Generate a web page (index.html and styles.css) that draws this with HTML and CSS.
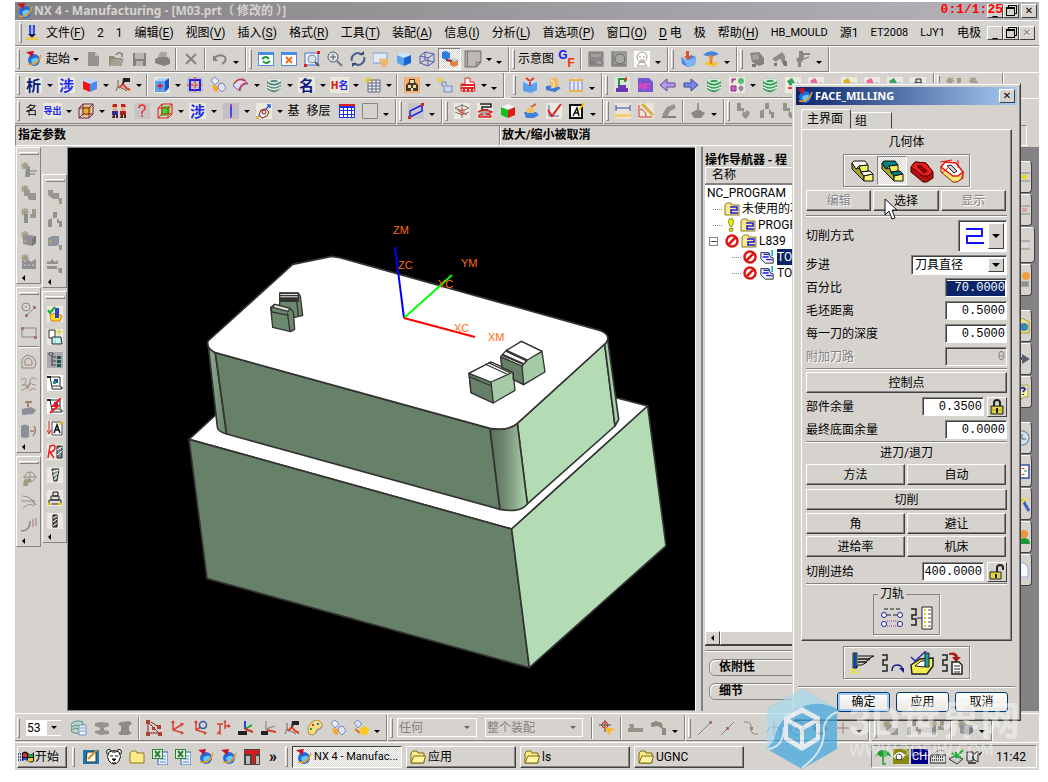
FILE: index.html
```html
<!DOCTYPE html>
<html lang="zh-CN">
<head>
<meta charset="utf-8">
<title>NX 4 - Manufacturing</title>
<link rel="stylesheet" href="styles.css">
</head>
<body>
<svg class="sprite" aria-hidden="true">
<defs>
<linearGradient id="cyl"><stop offset="0" stop-color="#5a705c"/><stop offset=".4" stop-color="#70896f"/><stop offset="1" stop-color="#aed8b0"/></linearGradient>
<linearGradient id="cyl2"><stop offset="0" stop-color="#8db08f"/><stop offset="1" stop-color="#678068"/></linearGradient>
</defs>
<symbol id="nx" viewBox="0 0 16 16"><circle cx="8" cy="9" r="6" fill="#1d6fe0"/><path d="M5 9Q8 6 12 7Q12 11 9 14Q6 14 5 9" fill="#69c6ff"/><path d="M2 13Q12 15 15 4" fill="none" stroke="#f39a1a" stroke-width="1.500"/><path d="M0 1L8 0L6 7L4 4z" fill="#c8102a"/></symbol>
<symbol id="bolt" viewBox="0 0 16 16"><path d="M5 0h6v9H5z" fill="#3c50c8"/><path d="M7 0h2v9H7z" fill="#9cb0ff"/><path d="M4 9h8l-4 4z" fill="#223"/><path d="M2 14h12M4 12L2 15M12 12l2 3M8 12v4" stroke="#f0c000"/></symbol>
<symbol id="new" viewBox="0 0 16 16"><path d="M3 1h7l4 4v10H3z" fill="#96938e"/><path d="M10 1v4h4" fill="#c4c1bc"/></symbol>
<symbol id="open" viewBox="0 0 16 16"><path d="M1 5h5l2 2h6v8H1z" fill="#8d8c7c"/><path d="M4 8h12l-3 7H1z" fill="#a5a494"/><path d="M8 4Q11 0 14 3v3" fill="none" stroke="#8c8f88" stroke-width="2"/></symbol>
<symbol id="save" viewBox="0 0 16 16"><path d="M2 2h13v13H2z" fill="#85827e"/><path d="M4 2h9v6H4zM5 10h7v5H5z" fill="#b9b5b0"/></symbol>
<symbol id="print" viewBox="0 0 16 16"><path d="M6 1h7l-1 6H4z" fill="#a9a6a1"/><path d="M1 8l4-2h9l2 3v4l-6 2-9-3z" fill="#83817d"/></symbol>
<symbol id="x" viewBox="0 0 16 16"><path d="M3 3l10 10M13 3L3 13" stroke="#85827e" stroke-width="2"/></symbol>
<symbol id="undo" viewBox="0 0 16 16"><path d="M2 7Q8 2 13 6Q15 10 10 13" fill="none" stroke="#85827e" stroke-width="2"/><path d="M1 4v6h5z" fill="#85827e"/></symbol>
<symbol id="win" viewBox="0 0 16 16"><path d="M0 1h16v14H0z" fill="#4a8ae8"/><path d="M1 4h14v10H1z" fill="#fff"/></symbol>
<symbol id="refresh" viewBox="0 0 16 16"><use href="#win"/><path d="M4 8Q8 4 11 8M12 10Q8 14 5 10" fill="none" stroke="#1a9a2a" stroke-width="2"/></symbol>
<symbol id="fit" viewBox="0 0 16 16"><use href="#win"/><path d="M5 6l6 6M11 6l-6 6" stroke="#f07020" stroke-width="2"/></symbol>
<symbol id="zbox" viewBox="0 0 16 16"><path d="M1 2h13v12H1z" fill="#eef4ff" stroke="#3a6ad8"/><circle cx="8" cy="8" r="4" fill="#cfe3f2" stroke="#888"/><path d="M11 11l4 4" stroke="#555" stroke-width="2"/><path d="M13 0h3v3h-3zM0 13h3v3H0z" fill="#e02020"/></symbol>
<symbol id="zoom" viewBox="0 0 16 16"><circle cx="6" cy="6" r="5" fill="#dce8f0" stroke="#555"/><path d="M10 10l5 5" stroke="#777" stroke-width="2"/><path d="M3 6h6M6 3v6" stroke="#555"/></symbol>
<symbol id="rot" viewBox="0 0 16 16"><path d="M2 10A6 6 0 0 1 12 4M14 6A6 6 0 0 1 4 12" fill="none" stroke="#49618c" stroke-width="2"/><path d="M9 4h5V0zM7 12H2v4z" fill="#3a4c74"/></symbol>
<symbol id="pan" viewBox="0 0 16 16"><path d="M0 2h14v10H0z" fill="#dfeafb" stroke="#7a9bd8"/><path d="M6 8l2-1 2 3 0-3h1l1 2 1-2 2 1v5l-3 3H9z" fill="#f2b46a"/></symbol>
<symbol id="cube" viewBox="0 0 16 16"><path d="M1 4L8 1l7 3-7 3z" class="fa"/><path d="M1 4l7 3v8l-7-3z" class="fb"/><path d="M15 4L8 7v8l7-3z" class="fc"/></symbol>
<symbol id="pcube" viewBox="0 0 16 16"><path d="M0 0h16v16H0z" fill="#ece9e0"/><path d="M1 4l4-3h10l-4 3z" fill="#a8d0fc"/><path d="M1 4h10v11H1z" fill="#5aa0f4"/><path d="M11 4l4-3v10l-4 4z" fill="#1c50c0"/><path d="M3 9h6M6 6v6" stroke="#e01818" stroke-width="1.500"/></symbol>
<symbol id="wire" viewBox="0 0 16 16"><path d="M1 5L6 1l9 2v8l-6 4-8-3zM1 5l8 2 6-4M9 7v8M6 1v8l9 2M6 9l-5 3" fill="none" stroke="currentColor"/></symbol>
<symbol id="wireG" viewBox="0 0 16 16"><path d="M6 3h7v8h-7zM4 5h6v8H4z" class="fa"/><path d="M1 5h10v10H1zM1 5l4-4h10L11 5M15 1v10l-4 4M5 1v10h10M5 11l-4 4" fill="none" stroke="currentColor"/></symbol>
<symbol id="blocks" viewBox="0 0 16 16"><path d="M0 1l4-1 4 2v5L4 9 0 7z" fill="#2d7be5"/><path d="M8 8l4-1 4 2v5l-4 2-4-2z" fill="#e88040"/><path d="M4 9l6 1" stroke="#a02020" stroke-width="2"/><path d="M8 8l4-1 4 2-4 2z" fill="#b8d8f8"/></symbol>
<symbol id="sheet" viewBox="0 0 16 16"><path d="M1 1h14v10l-4 4H1z" fill="#bcb9b4" stroke="#777"/><path d="M3 1v14M11 15v-4h4" stroke="#777" fill="none"/></symbol>
<symbol id="calc" viewBox="0 0 16 16"><path d="M0 0h16v16H0z" fill="#a59ea0"/><path d="M2 2h12v5H2zM2 9h4v2H2zM2 12h4v2H2zM8 9h6v5H8z" fill="none" stroke="#736c70"/></symbol>
<symbol id="ring" viewBox="0 0 16 16"><path d="M0 0h16v16H0z" fill="#9c9a98"/><path d="M2 1v13h13" stroke="#707070" fill="none"/><circle cx="9" cy="8" r="5" fill="#a5a89a" stroke="#60707a"/></symbol>
<symbol id="face" viewBox="0 0 16 16"><path d="M0 0h16v16H0z" fill="#fff"/><circle cx="8" cy="6" r="5" fill="none" stroke="#999"/><path d="M5 6h2M9 6h2M6 9h4M3 15l3-4h4l3 4z" stroke="#b09080" fill="none"/></symbol>
<symbol id="dcube" viewBox="0 0 16 16"><path d="M1 6l5 2 5-4 5 2-1 8-7 2-6-3z" fill="#4a80e8"/><path d="M1 6l7 3 8-3-1 8-7 2z" fill="#7fb4f4"/><path d="M6 0h3v5h2l-3 4-4-4h2z" fill="#e05020"/></symbol>
<symbol id="beach" viewBox="0 0 16 16"><path d="M0 4Q8-3 16 3L9 6z" fill="#3f86ea"/><path d="M0 13l6-3 10 2-5 4z" fill="#f5c040"/><path d="M6 4h4l-1 9H7z" fill="#f08030"/></symbol>
<symbol id="pc" viewBox="0 0 16 16"><path d="M1 2l9-1 5 6v6l-5 2-7-4z" fill="#85837f"/><path d="M3 4l6-1 1 5-6 1z" fill="#a5a29e"/><path d="M3 13h4v3H3z" fill="#777"/></symbol>
<symbol id="crane" viewBox="0 0 16 16"><path d="M0 8L10 1l3 4v5l-6-2-3 3z" fill="#8e8a86"/><path d="M9 9l6 1v5h-3zM2 12h3v3H2z" fill="#777"/></symbol>
<symbol id="robot" viewBox="0 0 16 16"><path d="M4 0h4v2h7v2H9v4l-3 4v4H3v-4L1 8l3-2z" fill="#8a8782"/><path d="M9 8l5-2" stroke="#6c6a66"/></symbol>
<symbol id="csys" viewBox="0 0 16 16"><path d="M4 1v9l10 3M4 10l8-5" fill="none" stroke="currentColor" stroke-width="1.500"/><path d="M2 3l2-3 2 3zM12 11l3 2-3 2zM11 3l4 0-2 4z" fill="currentColor"/></symbol>
<symbol id="csysr" viewBox="0 0 16 16"><use href="#csys"/><circle cx="11" cy="5" r="3.500" fill="#d6d3ce" stroke="#3058a8" stroke-width="1.500"/></symbol>
<symbol id="csysl" viewBox="0 0 16 16"><path d="M7 9V1" stroke="#2048d0" stroke-width="2"/><path d="M7 9l7-4" stroke="#20a030" stroke-width="2"/><path d="M7 9l8 3" stroke="#d03020" stroke-width="2"/><path d="M0 11h9v4H0z" fill="#222"/></symbol>
<symbol id="csysk" viewBox="0 0 16 16"><path d="M3 3v6l9 5M3 9l-2 5" stroke="#666" fill="none"/><path d="M4 11l4-4 3 4 4 2" stroke="#e04020" fill="none" stroke-width="2"/><path d="M8 1h7v4h-5l-3 3z" fill="#222"/></symbol>
<symbol id="pick" viewBox="0 0 16 16"><path d="M0 0h16v16H0z" fill="#c6c3c4"/><path d="M3 3h10v10H3z" fill="none" stroke="#2020f0" stroke-width="2"/><path d="M0 8h16M8 0v16" stroke="#e02020" stroke-dasharray="3 1"/></symbol>
<symbol id="bottle" viewBox="0 0 16 16"><path d="M1 3l4-3 4 4-4 4z" fill="#e8eefc" stroke="#7a88c0"/><path d="M2 8l6 1v6l-4-1z" fill="#f4a830"/><path d="M9 7l4-1 3 5-4 4-4-4z" fill="#dde4f8" stroke="#7a88c0"/></symbol>
<symbol id="arc" viewBox="0 0 16 16"><path d="M0 9Q3 1 11 2L15 7Q9 6 7 14z" fill="#d8defa" stroke="#6a60c0"/><path d="M1 7Q5 0 12 4M6 13Q8 6 14 6" fill="none" stroke="#e03030" stroke-width="1.500"/></symbol>
<symbol id="stack" viewBox="0 0 16 16"><path d="M1 4Q8-2 15 4v7Q8 19 1 12z" fill="currentColor"/><path d="M2 4Q8 0 14 4Q8 8 2 4M1 7Q8 12 15 7M1 10Q8 15 15 10" fill="none" stroke="#e8f4ec" stroke-width="1.500"/></symbol>
<symbol id="stackd" viewBox="0 0 16 16"><path d="M0 4q5-5 12-2l-2 10q-6 3-10-1z" fill="#b8d4c8" stroke="#5c8c80"/><path d="M0 7q5-3 9-1M0 10q5-3 8-1" fill="none" stroke="#5c8c80"/><path d="M8 5h7v10H8z" fill="#eef4ff" stroke="#7890c0"/><path d="M9 8h5M9 11h5" stroke="#7890c0"/></symbol>
<symbol id="tbl" viewBox="0 0 16 16"><path d="M3 3h12v12H3z" fill="#e8f0ff" stroke="#667"/><path d="M3 6h12M3 9h12M3 12h12M7 3v12M11 3v12" stroke="#667"/><path d="M3 0v6M0 3h6M1 1l4 4M5 1L1 5" stroke="#e8c800"/></symbol>
<symbol id="bug" viewBox="0 0 16 16"><path d="M0 0h16v16H0z" fill="#f0b070"/><path d="M2 14V8l3-3V2h6v3l3 3v6z" fill="#443828"/><path d="M6 3h4v3H6zM4 8h3v3H4zM9 8h3v3H9zM7 11h2v3H7z" fill="#e8d8a0"/></symbol>
<symbol id="gear" viewBox="0 0 16 16"><path d="M5 5h4v4h6v6H7V9H5z" fill="#c8d4f0" stroke="#7a86b8"/><path d="M3 0v7M0 3h7M1 1l4 4M5 1L1 5" stroke="#e8d030"/></symbol>
<symbol id="redm" viewBox="0 0 16 16"><path d="M5 1h5v4h4l1 9H1V7h4z" fill="#fff" stroke="#e82020"/><path d="M1 8h14M1 11h14M4 11v4M8 11v4M12 11v4" stroke="#e82020" stroke-width="2"/></symbol>
<symbol id="gift" viewBox="0 0 16 16"><path d="M1 5h14v8l-6 3-8-2z" fill="#5aa0f0"/><path d="M1 5l6-2 8 2-7 3z" fill="#b8dcfc"/><path d="M8 5v4M8 4L4 1M8 4l4-3" stroke="#e04020" stroke-width="2"/></symbol>
<symbol id="cd" viewBox="0 0 16 16"><path d="M1 9l9-1 6 3-6 4-9-2z" fill="#3a78e0"/><path d="M5 2l6-2q5 5 1 10l-6 2z" fill="#f5b860"/><path d="M6 3q5 2 2 8" stroke="#fff" fill="none"/></symbol>
<symbol id="gate" viewBox="0 0 16 16"><path d="M1 3l6-2 8 2v10H1z" fill="#e8ecf8"/><path d="M1 2h14v2H1z" fill="#f0b040"/><path d="M2 4v10M6 4v11M10 4v11M14 4v10" stroke="#6a78d0"/><path d="M1 13h14v2H1z" fill="#f0b040"/></symbol>
<symbol id="bed" viewBox="0 0 16 16"><path d="M0 0h16v16H0z" fill="#dfe4d8"/><path d="M4 8h8v3H4zM2 11h12v4H2z" fill="#7038b0"/><path d="M5 8V2h6v3" fill="none" stroke="#18a038" stroke-width="2"/><path d="M9 2l4-2v4z" fill="#e03030"/></symbol>
<symbol id="nc" viewBox="0 0 16 16"><path d="M1 1h11l4 4v10H1z" fill="#7058d0"/><path d="M3 6v6M3 6l4 6V6M13 7H9v4h4" stroke="#f040c0" fill="none" stroke-width="1.500"/></symbol>
<symbol id="la" viewBox="0 0 16 16"><path d="M0 8l7-6v4h8v4H7v4z" fill="currentColor" stroke="#5a4a98"/></symbol>
<symbol id="ra" viewBox="0 0 16 16"><path d="M15 8L8 2v4H1v4h7v4z" fill="currentColor" stroke="#3c4aa0"/></symbol>
<symbol id="flow" viewBox="0 0 16 16"><path d="M0 0h16v16H0z" fill="#ece9e0"/><path d="M2 9h5v5H2zM3 6V2h4" stroke="#a02080" fill="#b070c0"/><circle cx="12" cy="4" r="3" fill="#50c070"/><path d="M12 8l3 3-3 4-3-4z" fill="#8890a0"/></symbol>
<symbol id="misc" viewBox="0 0 16 16"><path d="M0 0h16v16H0z" fill="#ece9e0"/><path d="M2 4l5-3 3 5-5 3z" fill="currentColor"/><path d="M8 8l5-3 2 7-6 3z" fill="#8088d8"/><path d="M3 11h5" stroke="#e04040" stroke-width="2"/></symbol>
<symbol id="boys" viewBox="0 0 16 16"><path d="M0 0h16v16H0z" fill="#d8d4cc"/><path d="M2 1h4v3H1zM10 1h4l1 3h-5z" fill="#c02020"/><path d="M2 4h4v4H2zM10 4h4v4h-4z" fill="#e8b088"/><path d="M1 8h6v4H1z" fill="#303090"/><path d="M9 8h6v4H9z" fill="#b02020"/><path d="M2 12h2v3H1zM5 12h2v3H5zM10 12h2v3H9zM13 12h2v3h-2z" fill="#402018"/></symbol>
<symbol id="q" viewBox="0 0 16 16"><path d="M0 0h16v16H0z" fill="#c8c4c4"/><path d="M5 5Q5 2 8 2t3 3q0 2-3 4v2M8 12v2" fill="none" stroke="#e83030" stroke-width="1.500"/></symbol>
<symbol id="bar" viewBox="0 0 16 16"><path d="M0 0h16v16H0z" fill="#c2bfc4"/><path d="M8 2v12" stroke="#5040f0" stroke-width="2"/><path d="M7 1h2v2H7zM7 13h2v2H7z" fill="#c040c0"/></symbol>
<symbol id="node" viewBox="0 0 16 16"><path d="M0 0h16v16H0z" fill="#ece9e0"/><path d="M3 12l2-5 5-1 3 3-2 4-5 2z" fill="none" stroke="#802020"/><circle cx="8" cy="9" r="2" fill="none" stroke="#802020"/><path d="M10 6l4-4M11 2h3v3M1 15l3-3" fill="none" stroke="#2060e0" stroke-width="1.500"/><path d="M0 13h3v3H0z" fill="#f0b040"/></symbol>
<symbol id="grid" viewBox="0 0 16 16"><path d="M0 1h16v14H0z" fill="#2030f0"/><path d="M0 2h16" stroke="#e02020" stroke-width="2"/><path d="M1 5h3v2H1zM5 5h3v2H5zM9 5h3v2H9zM13 5h2v2h-2zM1 8h3v3H1zM5 8h3v3H5zM9 8h3v3H9zM13 8h2v3h-2zM1 12h3v2H1zM5 12h3v2H5zM9 12h3v2H9zM13 12h2v2h-2z" fill="#fff"/></symbol>
<symbol id="sq" viewBox="0 0 16 16"><path d="M.5.5h15v15H.5z" fill="none" stroke="#858a80"/></symbol>
<symbol id="plane" viewBox="0 0 16 16"><path d="M0 0h16v16H0z" fill="#c9c6c6"/><path d="M2 14V8l12-6v6z" fill="none" stroke="#2020f0" stroke-width="1.500"/><path d="M13 0h3v3h-3zM0 13h3v3H0z" fill="#e02020"/></symbol>
<symbol id="layer" viewBox="0 0 16 16"><path d="M0 0h16v16H0z" fill="#ece9e0"/><path d="M8 1v14M1 5l7-3 7 3-7 3zM1 9l7 3 7-3M3 7l10 5" fill="none" stroke="#807468"/><path d="M6 7h4v3H6z" fill="none" stroke="#e05040"/></symbol>
<symbol id="redp" viewBox="0 0 16 16"><path d="M0 0h16v16H0z" fill="#ece9e0"/><path d="M3 1h11v3H5v3h6" fill="none" stroke="#222" stroke-width="1.500"/><path d="M1 9q7-4 14 0-3 2-6 2 5 0 5 3H2q-1-3 4-3" fill="#a8a8a8" stroke="#e82020" stroke-width="1.500"/></symbol>
<symbol id="tool" viewBox="0 0 16 16"><path d="M1 9h12l3 3-5 3H3z" fill="#4080e0"/><path d="M4 5h7v5H4z" fill="#f0c060"/><path d="M8 4l5-3" stroke="#e06020" stroke-width="2"/></symbol>
<symbol id="check" viewBox="0 0 16 16"><path d="M0 0h16v16H0z" fill="#ece9e0"/><path d="M3 2v11h10" stroke="#4060c0" fill="none"/><path d="M2 7l4 6 9-12" fill="none" stroke="#e02020" stroke-width="2"/></symbol>
<symbol id="apen" viewBox="0 0 16 16"><path d="M1 2h12v13H1z" fill="#fff" stroke="#111" stroke-width="2"/><path d="M4 13l4-8 2 8M5 10h5" fill="none" stroke="#111" stroke-width="1.500"/><path d="M15 0l-5 7" stroke="#f0c000" stroke-width="2"/></symbol>
<symbol id="ruler" viewBox="0 0 16 16"><path d="M0 0h16v16H0z" fill="#e8e4d8"/><path d="M1 2v6M15 2v6M1 5h14" stroke="#2850b0" fill="none"/><path d="M0 11h16v3H0z" fill="#f0d070"/></symbol>
<symbol id="angle" viewBox="0 0 16 16"><path d="M0 0h16v16H0z" fill="#e8e4d8"/><path d="M1 2v12h13M2 6q6 2 6 7" stroke="#d03030" fill="none"/><path d="M4 1l11 11" stroke="#d8b040" stroke-width="3"/></symbol>
<symbol id="grayt" viewBox="0 0 16 16"><path d="M1 12l5-8 7-3 2 4-6 3-3 6z" fill="#96938e"/><path d="M1 14h14" stroke="#85827e" stroke-width="2"/></symbol>
<symbol id="grayd" viewBox="0 0 16 16"><path d="M1 10l7-4 7 4-4 5H4z" fill="#8a8884"/><path d="M8 0v8" stroke="#9a9692" stroke-width="2"/></symbol>
<symbol id="grayw" viewBox="0 0 16 16"><path d="M1 0h4v5h3v3H1zM7 8l3 2v-3l4 2-1 3-3 4-4-3" fill="#96938f"/></symbol>
<symbol id="star" viewBox="0 0 16 16"><path d="M4 0v7M0 4h8M1 1l6 6M7 1L1 7" stroke="#a29c84" stroke-width="1.500"/></symbol>
<symbol id="s1" viewBox="0 0 16 16"><use href="#star"/><path d="M5 5h4v10H4z" fill="#8c8e96"/><path d="M9 9h7M9 12h5" stroke="#aaa598" stroke-width="2"/></symbol>
<symbol id="s2" viewBox="0 0 16 16"><use href="#star"/><path d="M3 5h6v3h6v7H8l-2-4H3z" fill="#999794"/></symbol>
<symbol id="s3" viewBox="0 0 16 16"><use href="#star"/><path d="M3 6h4v9H3z" fill="#8b8d96"/><path d="M11 1h4v9H9V6h2z" fill="#a09a8c"/></symbol>
<symbol id="s4" viewBox="0 0 16 16"><use href="#star"/><path d="M2 6l5-2 8 1v7l-4 3-9-2z" fill="#8f9098"/><path d="M11 8l4-3v7l-4 3z" fill="#74767e"/><path d="M3 9h3v3H3z" fill="#b09c80"/></symbol>
<symbol id="s5" viewBox="0 0 16 16"><use href="#star"/><path d="M1 6l3 2 3-3 3 3 5-3v10H1z" fill="#8f9196"/><path d="M3 11h2M7 11h2M11 11h2" stroke="#d6d3ce"/></symbol>
<symbol id="t1" viewBox="0 0 16 16"><path d="M1 1h5v3h6v6H6L1 6z" fill="#999794"/><path d="M11 11l1-2h3v6h-3v-3z" fill="#a09c88"/></symbol>
<symbol id="t2" viewBox="0 0 16 16"><path d="M6 0h4v6H6zM1 8l4-2v9H1zM10 7l2 0v2h3v6h-3v-4h-2z" fill="#92918c"/></symbol>
<symbol id="t3" viewBox="0 0 16 16"><path d="M1 3l4-2h7v8l-3 2H1z" fill="#8f949e"/><path d="M2 5h3v3H2z" fill="#b09c80"/><path d="M11 10h4v5h-3v-3z" fill="#a09c88"/></symbol>
<symbol id="t4" viewBox="0 0 16 16"><path d="M0 3l3 1 2-3 3 3 3-2v4H0zM0 8h10v3H0zM11 10h4v5h-3z" fill="#92918c"/></symbol>
<symbol id="circ" viewBox="0 0 16 16"><circle cx="5" cy="5" r="4" fill="none" stroke="#8b8884"/><path d="M5 4v2M6 13l7-7" stroke="#8b8884"/><path d="M4 12h3v3H4zM12 4h3v3h-3z" fill="#a8746c"/></symbol>
<symbol id="rect" viewBox="0 0 16 16"><path d="M1 3h14v9H1z" fill="none" stroke="#8b8884"/><path d="M0 2h3v3H0zM13 11h3v3h-3z" fill="#a8746c"/></symbol>
<symbol id="cont" viewBox="0 0 16 16"><path d="M1 5l5-4 6 2q5 6 1 11H1z" fill="none" stroke="#8b8884"/><path d="M4 6l3-2q5 1 4 7H4z" fill="none" stroke="#a88078"/></symbol>
<symbol id="curl" viewBox="0 0 16 16"><path d="M0 3q6-4 5 1T1 8h5q-1 5-6 5M15 2Q9-1 9 4q0 4 6 4M8 14q4-4 7-1" fill="none" stroke="#96928c"/><path d="M6 12l3-6" stroke="#b07868" stroke-width="1.500"/></symbol>
<symbol id="slab" viewBox="0 0 16 16"><path d="M1 9l9-2 5 3-3 4-11 1z" fill="#8c8e9a"/><path d="M7 1v6M4 2h7" stroke="#a08870" stroke-width="2"/></symbol>
<symbol id="drum" viewBox="0 0 16 16"><path d="M0 3q4-3 8 0v11q-4 2-8 0z" fill="#8c8e9a"/><path d="M9 8h4M13 3q3 5-1 10" stroke="#a87c70" fill="none" stroke-width="1.500"/></symbol>
<symbol id="pan2" viewBox="0 0 16 16"><circle cx="9" cy="6" r="5" fill="none" stroke="#96928c"/><path d="M2 6h14M9 1v6" stroke="#96928c"/><path d="M3 9l6-2 2 3-4 2v3H2z" fill="#a09c80"/></symbol>
<symbol id="curve" viewBox="0 0 16 16"><path d="M1 2q10 0 13 9M0 7h14M2 14q7-6 11-2" fill="none" stroke="#96928c"/><path d="M10 5l5 6" stroke="#a86c64"/></symbol>
<symbol id="hook" viewBox="0 0 16 16"><path d="M0 14q9 0 9-10" fill="none" stroke="#8b8884" stroke-width="1.500"/><path d="M12 2v8M15 1v8" stroke="#a8746c"/></symbol>
<symbol id="cam" viewBox="0 0 16 16"><path d="M0 0h16v16H0z" fill="#ece9e0"/><path d="M3 9l6-2 6 3-2 5H4z" fill="#f4e020" stroke="#e87018"/><path d="M8 2h4v10H8z" fill="#3440c8"/><path d="M1 4l2 3 5-6" fill="none" stroke="#18b030" stroke-width="2"/></symbol>
<symbol id="ops" viewBox="0 0 16 16"><path d="M0 0h16v16H0z" fill="#ece9e0"/><path d="M2 1h6v8H2z" fill="#fff" stroke="#333"/><path d="M5 8h9l1 7H5z" fill="#8ee0e0" stroke="#333"/><path d="M12 0v6M9 3h6" stroke="#e0d000"/><path d="M7 9v5M10 9v5M12 9v5" stroke="#fff"/></symbol>
<symbol id="tree" viewBox="0 0 16 16"><path d="M0 0h16v16H0z" fill="#a9a9ac"/><path d="M2 1h4v2H2zM5 3v11M5 5h4M5 9h4M5 13h4" stroke="#444" fill="#fff"/><path d="M10 4h4v3h-4zM10 8h4v3h-4zM10 12h4v3h-4z" fill="#1c5a5a"/></symbol>
<symbol id="scroll" viewBox="0 0 16 16"><path d="M0 0h16v16H0z" fill="#fff"/><path d="M3 2h10v10h2v2H5v-2z" fill="#fff" stroke="#222"/><path d="M0 2h4" stroke="#222" stroke-width="2"/><path d="M7 4h4v4H7z" fill="#2040b0"/><path d="M6 6h3v3H6z" fill="#20a070"/><path d="M5 11h7" stroke="#333"/></symbol>
<symbol id="rscroll" viewBox="0 0 16 16"><use href="#scroll"/><path d="M14 0L6 8h5L3 15" fill="none" stroke="#f01818" stroke-width="2"/></symbol>
<symbol id="dna" viewBox="0 0 16 16"><path d="M0 0h16v16H0z" fill="#ece9e0"/><path d="M2 0v12M0 9l2 4 2-4" stroke="#e02020" fill="none"/><path d="M5 1h10v13H5z" fill="#fff" stroke="#446"/><path d="M7 12l3-8 3 8M8 9h4" stroke="#111" fill="none" stroke-width="1.500"/><path d="M15 0l-3 4" stroke="#f0d000" stroke-width="2"/></symbol>
<symbol id="rn" viewBox="0 0 16 16"><path d="M0 0h16v16H0z" fill="#ece9e0"/><path d="M1 14L3 2q6-2 5 2-1 4-5 4l4 6" fill="none" stroke="#f01818" stroke-width="1.500"/><path d="M10 2h5v12h-5z" fill="#789" stroke="#222"/><path d="M10 6l5-3M10 11l5-4" stroke="#fff"/></symbol>
<symbol id="screw" viewBox="0 0 16 16"><path d="M0 0h16v16H0z" fill="#ece9e0"/><path d="M5 2h7l-2 12H7z" fill="#90a098" stroke="#222"/><path d="M5 5l7-2M6 9l5-3M7 13l3-3" stroke="#fff"/></symbol>
<symbol id="drill" viewBox="0 0 16 16"><path d="M0 0h16v16H0z" fill="#ece9e0"/><path d="M6 2h4v12H6z" fill="#555" stroke="#111"/><path d="M6 5l4-2M6 9l4-3M6 13l4-3" stroke="#fff"/></symbol>
<symbol id="mach" viewBox="0 0 16 16"><path d="M0 0h16v16H0z" fill="#ece9e0"/><path d="M6 2h5v4H6zM4 6h8v4H4zM2 10h12v4H2z" fill="#ddd" stroke="#222"/><path d="M1 14h4M11 14h4" stroke="#e0c800" stroke-width="2"/></symbol>
<symbol id="pal" viewBox="0 0 16 16"><path d="M2 14Q-1 7 5 2t10 2q1 6-5 5-1 5-4 6z" fill="#f5dc80" stroke="#b09040"/><path d="M5 4h2v2H5z" fill="#e03030"/><path d="M10 3h2v2h-2z" fill="#2870e0"/><path d="M3 8h2v2H3z" fill="#20a040"/><path d="M8 14l6-7" stroke="#8090c0"/></symbol>
<symbol id="slot" viewBox="0 0 16 16"><path d="M1 3l5-1 9 1v3l-5 2v2l5 1v3l-8 1-6-2v-2l5-1V8L1 6z" fill="#96938f"/></symbol>
<symbol id="slot2" viewBox="0 0 16 16"><path d="M3 2l10-1 2 3-3 2v5l3 2-4 2H3l-2-2 3-2V6L1 4z" fill="#8e8b86"/></symbol>
<symbol id="base" viewBox="0 0 16 16"><path d="M1 4h5v4h9v4H0V8h2z" fill="#96938a"/></symbol>
<symbol id="mate" viewBox="0 0 16 16"><path d="M0 3l5-2 6 2 1 5h3v7h-4V9L7 6 0 7z" fill="#8e8b80"/></symbol>
<symbol id="filter" viewBox="0 0 16 16"><path d="M6 0v12M0 5h12" stroke="#444"/><circle cx="6" cy="5" r="3" fill="none" stroke="#e02020"/><path d="M6 7l10 2-5 3-1 4-2-4z" fill="#f8b820"/></symbol>
<symbol id="ln" viewBox="0 0 16 16"><path d="M1 15L14 2" stroke="#8b8884"/><path d="M12 1h3v3h-3z" fill="#a8746c"/></symbol>
<symbol id="ln2" viewBox="0 0 16 16"><path d="M1 15L14 2" stroke="#8b8884"/><path d="M6 7h3v3H6z" fill="#a8746c"/></symbol>
<symbol id="scv" viewBox="0 0 16 16"><path d="M1 2q8-1 7 6t7 6" stroke="#8b8884" fill="none"/><path d="M7 7h3v3H7z" fill="#a8746c"/></symbol>
<symbol id="cross" viewBox="0 0 16 16"><path d="M8 1v14M1 12q3-7 7-5 5-2 7 5" stroke="#777" fill="none"/></symbol>
<symbol id="cdot" viewBox="0 0 16 16"><circle cx="8" cy="8" r="7" fill="none" stroke="#777"/><path d="M7 7h3v3H7z" fill="#a8746c"/></symbol>
<symbol id="quad" viewBox="0 0 16 16"><circle cx="8" cy="8" r="6" fill="none" stroke="#777"/><path d="M7 1h3v3H7zM7 12h3v3H7zM1 7h3v3H1zM12 7h3v3h-3z" fill="#a8746c"/></symbol>
<symbol id="plus" viewBox="0 0 16 16"><path d="M8 2v12M2 8h12" stroke="#a8746c"/></symbol>
<symbol id="flag" viewBox="0 0 16 16"><path d="M4 4q3-3 6 0t6-1v9q-3 3-6 0t-6 0z" fill="#111"/><path d="M5 5q2-2 4 0v3H5z" fill="#e83030"/><path d="M10 5q2 1 5 0v3h-5z" fill="#20b040"/><path d="M5 9h4v3q-2-2-4 0z" fill="#3050e8"/><path d="M10 9h5v3q-3 1-5 0z" fill="#f0d020"/><path d="M0 5h3M0 8h3M0 11h3" stroke="#3048b8" stroke-dasharray="1 1" stroke-width="2"/></symbol>
<symbol id="desk" viewBox="0 0 16 16"><path d="M0 1h16v14H0z" fill="#1878b8"/><path d="M4 3h9v10H3z" fill="#fff8e0" stroke="#333"/><path d="M5 10l9-9" stroke="#c89020" stroke-width="2"/></symbol>
<symbol id="bear" viewBox="0 0 16 16"><circle cx="3" cy="3" r="2.500" fill="#fff" stroke="#111"/><circle cx="13" cy="3" r="2.500" fill="#fff" stroke="#111"/><path d="M3 3q5-3 10 0 3 5 0 9-5 6-10 0-3-4 0-9z" fill="#fff" stroke="#111"/><path d="M4 7h3M9 7h3M6 10h4l-2 2zM6 14h4M7 2v2M9 2v2" stroke="#111" fill="#111"/></symbol>
<symbol id="fold" viewBox="0 0 16 16"><path d="M1 4l2-2h4l1 2h7v10H1z" fill="#fbe98a" stroke="#8a7a20"/></symbol>
<symbol id="ofold" viewBox="0 0 16 16"><path d="M1 4l2-2h4l1 2h6v10H1z" fill="#fbe98a" stroke="#7a6a10"/><path d="M1 14L4 7h11.500l-2 7z" fill="#fff6a0" stroke="#7a6a10"/></symbol>
<symbol id="xls" viewBox="0 0 16 16"><path d="M6 3h10v13H6z" fill="#e8f0ff" stroke="#3060a8"/><path d="M8 7h6M8 10h6M8 13h6" stroke="#6090d0"/><path d="M0 0h11v10H0z" fill="#30803c"/><path d="M1 1h9v8H1z" fill="#dff0dc"/><path d="M3 2l5 6M8 2L3 8" stroke="#30803c" stroke-width="2"/></symbol>
<symbol id="tt" viewBox="0 0 16 16"><path d="M0 0h16v16H0z" fill="#444"/><path d="M1 1h14v4h-4v10H8V5H1z" fill="#e01818"/><path d="M2 7h4v8H2zM12 7h3v8h-3z" fill="#bbb"/></symbol>
<symbol id="ncf" viewBox="0 0 16 14"><path d="M1 3l2-2h4l1 2h7v10H1z" fill="#fbe98a" stroke="#8a7a20"/><path d="M6 5h7v3H7v3h7" fill="none" stroke="#1818f0" stroke-width="1.500"/></symbol>
<symbol id="no" viewBox="0 0 14 14"><circle cx="7" cy="7" r="5.500" fill="#fff" stroke="#e01414" stroke-width="2.500"/><path d="M3 11l8-8" stroke="#e01414" stroke-width="2.500"/></symbol>
<symbol id="bang" viewBox="0 0 8 16"><path d="M2 1h4l1 3-2 6H3L1 4zM2 12h4v3H2z" fill="#f4f000" stroke="#777718"/></symbol>
<symbol id="op" viewBox="0 0 16 16"><path d="M1 3h9l2 5 3 1v6H6l-5-5z" fill="#f4f6ff" stroke="#111"/><path d="M4 5h7M3 8h7M7 11h7" stroke="#1818f0" stroke-width="1.500"/><path d="M14 0v7" stroke="#14b8b8" stroke-width="2"/></symbol>
<symbol id="part" viewBox="0 0 24 24"><path d="M2 4v6l12 12v-6l-3-2v-3L8 9 6 10z" fill="#a8a430" stroke="#111"/><path d="M2 4l2-2h11l3 4-9 1-3 3z" class="fa" stroke="#111"/><path d="M9 7l9-1v6l-7 1z" fill="#f4f060" stroke="#111"/><path d="M11 13l9-1 3 3-9 2z" class="fa" stroke="#111"/><path d="M14 17l9-2v7h-9z" fill="#f8f480" stroke="#111"/></symbol>
<symbol id="slabr" viewBox="0 0 24 24"><path d="M1 8l4-5 11 1 7 9v6l-6 4h-4L1 13z" fill="#b01010" stroke="#400"/><path d="M1 8l4-5 11 1 7 9-5 4h-5z" fill="#e82020" stroke="#500"/><path d="M7 7l3-1 7 6-3 2z" fill="#a00" stroke="#400"/></symbol>
<symbol id="slabo" viewBox="0 0 24 24"><path d="M1 8l4-5 11 1 7 9v6l-6 4h-4L1 13z" fill="#f4ee70" stroke="#a01010"/><path d="M1 8l4-5 11 1 7 9-5 4h-5z" fill="#fff" stroke="#e81818" stroke-width="1.500"/><path d="M7 7l4-1 6 6-3 2z" fill="#ccc" stroke="#222"/><path d="M0 3l12-2M18 1v8M2 14l7-6M21 20l3-8" stroke="#e81818"/></symbol>
<symbol id="zig" viewBox="0 0 20 18"><path d="M1 2h16v7H2v7h17" fill="none" stroke="#1414f0" stroke-width="2"/></symbol>
<symbol id="lock" viewBox="0 0 16 16"><path d="M5 7V4q0-3 3-3t3 3v3" fill="none" stroke="#222" stroke-width="2"/><path d="M2 7h12v8H2z" fill="#c8bc28" stroke="#222"/><path d="M4 9h8M4 13h8" stroke="#fff68a"/><path d="M7 9h2v5H7z" fill="#222"/></symbol>
<symbol id="unlock" viewBox="0 0 16 16"><path d="M8 8V4q0-3 3-3t3 3v2" fill="none" stroke="#222" stroke-width="2"/><path d="M1 8h11v7H1z" fill="#e0d830" stroke="#222"/><path d="M6 10h2v4H6z" fill="#222"/></symbol>
<symbol id="path1" viewBox="0 0 24 24"><path d="M4 3h17M7 9h11" stroke="#222" stroke-dasharray="4 2"/><path d="M7 15h11M7 20h11" stroke="#a030a0" stroke-dasharray="1 1"/><g fill="#fff" stroke="#1c1c90"><circle cx="4" cy="9" r="2.500"/><circle cx="20" cy="9" r="2.500"/><circle cx="4" cy="18" r="2.500"/><circle cx="20" cy="18" r="2.500"/></g></symbol>
<symbol id="path2" viewBox="0 0 24 24"><path d="M1 3h5v6H2v4h4v6H1" fill="none" stroke="#222" stroke-width="1.500"/><path d="M7 12h5" stroke="#1c1c90"/><path d="M12 1h10v22H12z" fill="#fff" stroke="#222"/><path d="M14 4h2M14 8h2M14 12h2M14 16h2M14 20h2" stroke="#d8cc18" stroke-width="2"/><path d="M18 4h3M18 8h3M18 12h3M18 16h3M18 20h3" stroke="#555"/></symbol>
<symbol id="gen" viewBox="0 0 24 24"><path d="M3 2h4v15H3z" fill="#18a0a0" stroke="#222"/><path d="M5 2v15" stroke="#2020b0" stroke-width="1.500"/><path d="M8 5h16l-6 3H8h12l-5 3H8h9l-5 3H8l-2 3" stroke="#111" fill="none"/><path d="M0 19h2M4 18v4M8 19h2M1 22h2M7 22h2" stroke="#f0e020" stroke-width="2"/></symbol>
<symbol id="zg" viewBox="0 0 24 24"><path d="M2 4h5v5H3v5h4v6H2" fill="none" stroke="#222" stroke-width="1.500"/></symbol>
<symbol id="replay" viewBox="0 0 24 24"><use href="#zg"/><path d="M12 20q0-6 5-6t5 4" fill="none" stroke="#1c1c90" stroke-width="1.500"/><path d="M19 17h5v5z" fill="#1c1c90"/></symbol>
<symbol id="verify" viewBox="0 0 24 24"><path d="M1 14l9-6 13-1v8l-6 8H2z" fill="#f4ee50" stroke="#222" stroke-width="1.500"/><path d="M5 15l6-5h7l-4 6z" fill="#fff" stroke="#222"/><path d="M15 2h4v14h-4z" fill="#18a0a0" stroke="#222"/><path d="M1 6l4 4L16 0" fill="none" stroke="#2030b0" stroke-width="1.500"/></symbol>
<symbol id="list" viewBox="0 0 24 24"><use href="#zg"/><path d="M9 2q8-2 9 4h3l-5 5-4-5h3q-1-3-6-2z" fill="#b01818"/><path d="M12 11h7l3 3v9H12z" fill="#fff" stroke="#222" stroke-width="1.500"/><path d="M14 15h6M14 18h6M14 21h6" stroke="#222"/></symbol>
<symbol id="umb" viewBox="0 0 16 16"><path d="M0 8q2-7 8-7t8 7l-3-2-3 2-2-2-2 2-3-2z" fill="#18a028"/><path d="M8 6v9h3" fill="none" stroke="#18a028" stroke-width="1.500"/></symbol>
<symbol id="nv" viewBox="0 0 16 16"><path d="M0 0h16v15H0z" fill="#8a8a10"/><path d="M0 8q6-9 12-2-4 8-12 2" fill="#fff"/><circle cx="6" cy="8" r="3" fill="none" stroke="#333"/></symbol>
<symbol id="kb" viewBox="0 0 16 16"><path d="M1 6h15v8H0z" fill="#ddd" stroke="#222"/><path d="M2 8h12M2 11h12" stroke="#222" stroke-dasharray="1 1" stroke-width="1.500"/><path d="M4 5q4-5 10-3" stroke="#222" fill="none" stroke-dasharray="1 1"/></symbol>
<symbol id="usb" viewBox="0 0 16 16"><path d="M1 10l6-3 8 3-6 5z" fill="#ccc" stroke="#333"/><path d="M4 4l4 4 7-7M8 3v5h5" fill="none" stroke="#20b030" stroke-width="2"/></symbol>
<symbol id="spk" viewBox="0 0 16 16"><path d="M1 3h6v9H1zM7 6l5-4v11l-5-3z" fill="#ddd" stroke="#222"/><path d="M13 6l3-3M2 14h8" stroke="#222" stroke-width="1.500"/></symbol>
<symbol id="clk" viewBox="0 0 16 16"><circle cx="8" cy="8" r="7" fill="#cfe0f0" stroke="#8898a8" stroke-width="1.500"/><path d="M8 4v5h4" stroke="#556" fill="none"/></symbol>
<symbol id="net" viewBox="0 0 16 16"><path d="M2 4l6-4 7 4v11H2z" fill="#f4e480" stroke="#a89838"/><circle cx="10" cy="9" r="4" fill="#3080d8"/><path d="M9 6q4 2 1 6" fill="#30a850"/></symbol>
<symbol id="cur" viewBox="0 0 16 16"><path d="M16 8L8 3v3H2l3 3H8v4z" fill="#556070"/></symbol>
<symbol id="help" viewBox="0 0 16 16"><path d="M3 1h11v12h-4l-3 3v-3H3z" fill="#f4f0a0" stroke="#a8a050"/><path d="M7 5q2-3 4 0l-2 3M9 10v1" stroke="#2030c0" fill="none" stroke-width="2"/></symbol>
<symbol id="chart" viewBox="0 0 16 16"><path d="M2 2h13v13H2z" fill="#fff" stroke="#3850a0" stroke-width="1.500"/><path d="M9 5v1M9 11v1" stroke="#e03030" stroke-width="3"/><path d="M10 8h3" stroke="#209040"/></symbol>
<symbol id="wand" viewBox="0 0 16 16"><path d="M8 3l7 12" stroke="#4060c8" stroke-width="3"/><path d="M9 1v6M6 4h8M6 8l7-6" stroke="#e8dc50" stroke-width="1.500"/></symbol>
<symbol id="user" viewBox="0 0 16 16"><circle cx="10" cy="5" r="4" fill="#e89838"/><path d="M4 15q0-6 6-6t6 6z" fill="#209838"/></symbol>
<symbol id="mtool" viewBox="0 0 16 16"><circle cx="12" cy="4" r="4" fill="#f0a040"/><path d="M7 9h8v6H7z" fill="#a8a6a0"/><path d="M8 11h6M8 13h6" stroke="#777"/></symbol>
<symbol id="rm" viewBox="0 0 16 16"><path d="M2 4h14M2 12h14" stroke="#888"/><path d="M8 6h5v4H8z" class="fa"/></symbol>
</svg>

<div class="app">
  <header class="titlebar">
    <svg class="i"><use href="#nx"/></svg>
    <h1>NX 4 - Manufacturing - [M03.prt（ 修改的 ）]</h1>
    <span class="wb"><button aria-label="最小化">_</button><button aria-label="还原" class="rst"></button><button aria-label="关闭">✕</button></span>
    <span class="rec">0:1/1:25</span>
  </header>

  <nav class="menubar">
    <i class="h"></i><svg class="i"><use href="#bolt"/></svg>
    <div class="menus">
      <button>文件(<u>F</u>)</button><button>2</button><button>1</button><button>编辑(<u>E</u>)</button><button>视图(<u>V</u>)</button><button>插入(<u>S</u>)</button><button>格式(<u>R</u>)</button><button>工具(<u>T</u>)</button><button>装配(<u>A</u>)</button><button>信息(<u>I</u>)</button><button>分析(<u>L</u>)</button><button>首选项(<u>P</u>)</button><button>窗口(<u>O</u>)</button><button><u>D</u> 电</button><button>极</button><button>帮助(<u>H</u>)</button><button class="lat">HB_MOULD</button><button>源1</button><button class="lat">ET2008</button><button class="lat">LJY1</button><button>电极</button>
    </div>
    <span class="wb"><button aria-label="最小化文档">_</button><button aria-label="还原文档" class="rst"></button><button aria-label="关闭文档" class="dis">✕</button></span>
  </nav>

  <div class="row">
    <div class="g"><i class="h"></i><button class="b" aria-label="NX"><svg><use href="#nx"/></svg></button><button class="t">起始</button><button class="d" aria-label="起始菜单"></button><button class="b" aria-label="新建"><svg><use href="#new"/></svg></button><button class="b" aria-label="打开"><svg><use href="#open"/></svg></button><button class="b" aria-label="保存"><svg><use href="#save"/></svg></button><button class="b" aria-label="打印"><svg><use href="#print"/></svg></button><i class="s"></i><button class="b" aria-label="删除"><svg><use href="#x"/></svg></button><i class="s"></i><button class="b" aria-label="撤消"><svg><use href="#undo"/></svg></button><button class="d e" aria-label="更多"></button></div>
    <div class="g"><i class="h"></i><button class="b" aria-label="刷新"><svg><use href="#refresh"/></svg></button><button class="b" aria-label="适合窗口"><svg><use href="#fit"/></svg></button><button class="b" aria-label="框选缩放"><svg><use href="#zbox"/></svg></button><button class="b" aria-label="缩放"><svg><use href="#zoom"/></svg></button><button class="b" aria-label="旋转"><svg><use href="#rot"/></svg></button><button class="b" aria-label="平移"><svg><use href="#pan"/></svg></button><button class="b blue" aria-label="着色"><svg><use href="#cube"/></svg></button><button class="b violet" aria-label="线框"><svg><use href="#wire"/></svg></button><button class="b on" aria-label="方位"><svg><use href="#blocks"/></svg></button><button class="b" aria-label="布局"><svg class="big"><use href="#sheet"/></svg></button><button class="d" aria-label="布局菜单"></button><button class="d e" aria-label="更多"></button></div>
    <div class="g"><i class="h"></i><button class="t">示意图</button><button class="b gf" aria-label="GF"><b>G</b><em>F</em></button><i class="s"></i><button class="b" aria-label="计算"><svg><use href="#calc"/></svg></button><button class="b" aria-label="圆环"><svg><use href="#ring"/></svg></button><button class="b" aria-label="人像"><svg><use href="#face"/></svg></button><button class="d e" aria-label="更多"></button></div>
    <div class="g"><i class="h"></i><button class="b" aria-label="导入"><svg><use href="#dcube"/></svg></button><button class="b" aria-label="模型"><svg><use href="#beach"/></svg></button><button class="d e" aria-label="更多"></button></div>
    <div class="g"><i class="h"></i><button class="b" aria-label="工作站"><svg><use href="#pc"/></svg></button><button class="b" aria-label="机床"><svg><use href="#crane"/></svg></button><button class="b" aria-label="模拟"><svg><use href="#robot"/></svg></button><button class="d e" aria-label="更多"></button></div>
  </div>

  <div class="row">
    <div class="g"><i class="h"></i><button class="b z navy">析</button><button class="d" aria-label="析菜单"></button><button class="b z">涉</button><button class="b redc" aria-label="红块"><svg><use href="#cube"/></svg></button><button class="d" aria-label="块菜单"></button><button class="b" aria-label="坐标系"><svg><use href="#csysk"/></svg></button><button class="d" aria-label="坐标系菜单"></button><i class="s"></i><button class="b" aria-label="长方体"><svg><use href="#pcube"/></svg></button><button class="d" aria-label="体菜单"></button><button class="b" aria-label="选取"><svg><use href="#pick"/></svg></button><button class="b" aria-label="装配件"><svg><use href="#bottle"/></svg></button><button class="b" aria-label="曲面"><svg><use href="#arc"/></svg></button><button class="d" aria-label="曲面菜单"></button><button class="b teal" aria-label="图层"><svg><use href="#stack"/></svg></button><button class="d" aria-label="图层菜单"></button><button class="b z navy">名</button><button class="d" aria-label="名菜单"></button><button class="b z sm"><b>H</b>名</button><button class="d" aria-label="H名菜单"></button><button class="b" aria-label="表"><svg><use href="#tbl"/></svg></button><button class="d" aria-label="表菜单"></button><i class="s"></i><button class="b" aria-label="刀具库"><svg><use href="#bug"/></svg></button><button class="d" aria-label="刀具库菜单"></button><button class="b" aria-label="创建组件"><svg><use href="#gear"/></svg></button><button class="b" aria-label="机床视图"><svg><use href="#redm"/></svg></button><button class="d" aria-label="视图菜单"></button><button class="d e" aria-label="更多"></button></div>
    <div class="g far"><i class="h"></i><button class="b" aria-label="毛坯"><svg><use href="#gift"/></svg></button><button class="b" aria-label="片体"><svg><use href="#cd"/></svg></button><button class="b" aria-label="框架"><svg><use href="#gate"/></svg></button><button class="d e" aria-label="更多"></button></div>
    <div class="g"><i class="h"></i><button class="b" aria-label="夹具"><svg><use href="#bed"/></svg></button><button class="b" aria-label="NC"><svg><use href="#nc"/></svg></button><button class="b lilac" aria-label="上一个"><svg><use href="#la"/></svg></button><button class="b peri" aria-label="下一个"><svg><use href="#ra"/></svg></button><button class="b green" aria-label="层叠"><svg><use href="#stack"/></svg></button><button class="b" aria-label="流程"><svg><use href="#flow"/></svg></button><button class="d" aria-label="流程菜单"></button><button class="b green" aria-label="层"><svg><use href="#stack"/></svg></button><button class="b green" aria-label="组合"><svg><use href="#misc"/></svg></button><button class="b pink" aria-label="变换"><svg><use href="#misc"/></svg></button><button class="d" aria-label="变换菜单"></button><button class="b gold" aria-label="编辑刀轨"><svg><use href="#misc"/></svg></button><button class="b pink" aria-label="仿真"><svg><use href="#misc"/></svg></button><button class="b green" aria-label="后处理"><svg><use href="#misc"/></svg></button><button class="b" aria-label="车间文档"><svg><use href="#mach"/></svg></button></div>
    <div class="g"><i class="h"></i><button class="b" aria-label="刀轴"><svg><use href="#s3"/></svg></button><button class="b" aria-label="刀柄"><svg><use href="#s1"/></svg></button><button class="d e" aria-label="更多"></button></div>
  </div>

  <div class="row">
    <div class="g"><i class="h"></i><button class="t nar">名</button><button class="b z sm sm2">导出</button><button class="d" aria-label="导出菜单"></button><button class="b maroon" aria-label="方盒"><svg><use href="#wireG"/></svg></button><button class="d" aria-label="方盒菜单"></button><button class="b" aria-label="双人"><svg><use href="#boys"/></svg></button><button class="b" aria-label="帮助"><svg><use href="#q"/></svg></button><button class="b redg" aria-label="线框盒"><svg><use href="#wireG"/></svg></button><button class="d" aria-label="线框盒菜单"></button><button class="b z">涉</button><button class="d" aria-label="涉菜单"></button><button class="b" aria-label="线"><svg><use href="#bar"/></svg></button><button class="d" aria-label="线菜单"></button><button class="b" aria-label="节点"><svg><use href="#node"/></svg></button><button class="d" aria-label="节点菜单"></button><button class="t ji">基</button><button class="t yi">移层</button><button class="b" aria-label="网格"><svg><use href="#grid"/></svg></button><button class="b" aria-label="矩形"><svg><use href="#sq"/></svg></button><button class="d e" aria-label="更多"></button></div>
    <div class="g"><i class="h"></i><button class="b" aria-label="基准面"><svg><use href="#plane"/></svg></button><button class="d e" aria-label="更多"></button></div>
    <div class="g"><i class="h"></i><button class="b" aria-label="层设置"><svg><use href="#layer"/></svg></button><button class="b" aria-label="切削层"><svg><use href="#redp"/></svg></button><button class="b rgb" aria-label="彩块"><svg><use href="#cube"/></svg></button><button class="b" aria-label="工具"><svg><use href="#tool"/></svg></button><button class="b" aria-label="检查"><svg><use href="#check"/></svg></button><button class="b" aria-label="注释"><svg><use href="#apen"/></svg></button><button class="d e" aria-label="更多"></button></div>
    <div class="g"><i class="h"></i><button class="b" aria-label="距离"><svg><use href="#ruler"/></svg></button><button class="b" aria-label="角度"><svg><use href="#angle"/></svg></button><button class="b" aria-label="半径"><svg><use href="#grayt"/></svg></button><i class="s"></i><button class="b" aria-label="偏差"><svg><use href="#grayd"/></svg></button><button class="d e" aria-label="更多"></button></div>
    <div class="g"><i class="h"></i><button class="b" aria-label="扳手"><svg><use href="#grayw"/></svg></button><button class="b" aria-label="信息"><svg><use href="#t2"/></svg></button><button class="b" aria-label="路径"><svg><use href="#grayw"/></svg></button><button class="d e" aria-label="更多"></button></div>
  </div>

  <div class="status"><b>指定参数</b><b>放大/缩小被取消</b></div>

  <main class="work">
    <div class="side">
      <div class="col">
        <div class="vg"><i class="vh"></i><button class="b" aria-label="创建程序"><svg><use href="#s1"/></svg></button><button class="b" aria-label="创建刀具"><svg><use href="#s2"/></svg></button><button class="b" aria-label="创建几何体"><svg><use href="#s3"/></svg></button><button class="b" aria-label="创建方法"><svg><use href="#s4"/></svg></button><button class="b" aria-label="创建操作"><svg><use href="#s5"/></svg></button><button class="l" aria-label="更多"></button></div>
        <div class="vg"><i class="vh"></i><button class="b" aria-label="圆"><svg><use href="#circ"/></svg></button><button class="b" aria-label="矩形"><svg><use href="#rect"/></svg></button><i class="vs"></i><button class="b" aria-label="轮廓"><svg><use href="#cont"/></svg></button><button class="b" aria-label="连接"><svg><use href="#curl"/></svg></button><button class="b" aria-label="投影"><svg><use href="#slab"/></svg></button><button class="b" aria-label="回转"><svg><use href="#drum"/></svg></button><button class="l" aria-label="更多"></button></div>
        <div class="vg"><i class="vh"></i><button class="b" aria-label="编辑曲线"><svg><use href="#pan2"/></svg></button><button class="b" aria-label="修剪"><svg><use href="#curve"/></svg></button><button class="b" aria-label="拉长"><svg><use href="#hook"/></svg></button><button class="l" aria-label="更多"></button></div>
      </div>
      <div class="col low">
        <div class="vg"><i class="vh"></i><button class="b" aria-label="程序顺序"><svg><use href="#t1"/></svg></button><button class="b" aria-label="刀具视图"><svg><use href="#t2"/></svg></button><button class="b" aria-label="几何视图"><svg><use href="#t3"/></svg></button><button class="b" aria-label="方法视图"><svg><use href="#t4"/></svg></button><button class="l" aria-label="更多"></button></div>
        <div class="vg"><i class="vh"></i><button class="b" aria-label="加工"><svg><use href="#cam"/></svg></button><button class="b" aria-label="操作"><svg><use href="#ops"/></svg></button><button class="b" aria-label="导航树"><svg><use href="#tree"/></svg></button><button class="b" aria-label="文档"><svg><use href="#scroll"/></svg></button><button class="b" aria-label="快速文档"><svg><use href="#rscroll"/></svg></button><button class="b" aria-label="注释编辑"><svg><use href="#dna"/></svg></button><button class="b" aria-label="重命名"><svg><use href="#rn"/></svg></button><button class="b" aria-label="螺纹"><svg><use href="#screw"/></svg></button><button class="b" aria-label="机床"><svg><use href="#mach"/></svg></button><button class="b" aria-label="钻头"><svg><use href="#drill"/></svg></button><button class="l" aria-label="更多"></button></div>
      </div>
    </div>

    <section class="view">
      <svg class="model" viewBox="68 148 626 562" preserveAspectRatio="xMinYMin meet" role="img" aria-label="零件模型">
        <g transform="translate(180 210) scale(.33333)" stroke="#333" stroke-width="5" stroke-linejoin="round">
          <path d="M27 688L107 615L1200 540L1305 562L1403 588L995 957z" fill="#fff" stroke="none"/>
          <path d="M107 615L27 688L995 957L1403 588L1305 562" fill="none"/>
          <path d="M27 688L995 957L1048 1373L81 1106z" fill="#678068"/>
          <path d="M995 957L1403 588L1458 1008L1048 1373z" fill="#b3dcb5"/>
          <path d="M84 400Q90 422 106 428L140 672Q112 664 112 650z" fill="url(#cyl2)"/>
          <path d="M106 428L930 655L960 898L140 672z" fill="#678068"/>
          <path d="M1012 640L1274 402L1305 648L1042 882z" fill="#b3dcb5"/>
          <path d="M1274 402L1283 388L1316 628L1305 648z" fill="#a9d2ab"/>
          <path d="M930 655Q985 662 1012 640L1042 882Q1020 910 960 898z" fill="url(#cyl)"/>
          <path d="M84 393L338 163L455 139L480 143L1262 362Q1287 372 1283 388Q1281 398 1274 402L1012 640Q985 664 930 655L106 428Q78 415 84 393z" fill="#fff"/>
          <g stroke-width="4">
            <path d="M299 249L355 249L361 258L368 316L345 322L322 316L299 290z" fill="#6b8a6d"/>
            <path d="M299 250h56v14h-56z" fill="#dfe8df"/>
            <path d="M299 257h56M350 270l5 48" fill="none"/>
            <path d="M299 266h56v8h-56z" fill="#333"/>
            <path d="M272 292L284 283L330 295L340 305L344 358L332 365L278 352z" fill="#6b8a6d"/>
            <path d="M284 283l46 12-6 9-46-12z" fill="#dfe8df"/>
            <path d="M322 308l8 55M272 292l4 14 50 10" fill="none"/>
            <path d="M867 490L933 456L1000 486L1005 541L940 579L873 548z" fill="#a4cba6"/>
            <path d="M867 490L933 516L940 579L873 548z" fill="#678068"/>
            <path d="M867 490L933 456L1000 486L933 516z" fill="#fff"/>
            <path d="M867 500L935 528M915 462L980 492M925 458L990 488" fill="none"/>
            <path d="M962 440L1024 394L1086 424L1095 486L1031 524L1000 508L1000 488L966 472z" fill="#a4cba6"/>
            <path d="M962 440L1026 468L1031 524L1000 508L1000 488L966 472z" fill="#678068"/>
            <path d="M962 440L978 422L1024 394L1086 424L1042 450L1026 468z" fill="#fff"/>
            <path d="M978 422L1042 452M966 434L1030 462" stroke-width="7"/>
          </g>
        </g>
        <g fill="none" stroke-width="2"><path d="M404 318L395 247" stroke="#00f"/><path d="M404 318L452 275" stroke="#0f0"/><path d="M404 318L475 337" stroke="#f00"/></g>
        <g class="axis"><text x="393" y="234">ZM</text><text x="398" y="269">ZC</text><text x="461" y="267">YM</text><text x="438" y="288">YC</text><text x="454" y="332">XC</text><text x="488" y="341">XM</text></g>
      </svg>
    </section>

    <aside class="nav">
      <h2>操作导航器 - 程</h2>
      <div class="colhead">名称</div>
      <ul class="tree">
        <li>NC_PROGRAM</li>
        <li class="l1"><i class="ln"></i><svg class="i"><use href="#ncf"/></svg>未使用的项</li>
        <li class="l1"><i class="ln"></i><svg class="i bang"><use href="#bang"/></svg><svg class="i"><use href="#ncf"/></svg>PROGRAM</li>
        <li class="l0"><button class="exp" aria-label="折叠">−</button><svg class="i no"><use href="#no"/></svg><svg class="i"><use href="#ncf"/></svg>L839</li>
        <li class="l2"><i class="ln"></i><svg class="i no"><use href="#no"/></svg><svg class="i"><use href="#op"/></svg><span class="sel">TO</span></li>
        <li class="l2"><i class="ln"></i><svg class="i no"><use href="#no"/></svg><svg class="i"><use href="#op"/></svg><span>TO</span></li>
      </ul>
      <div class="hs"><button class="left" aria-label="向左滚动"></button><span></span></div>
      <div class="folds"><button>依附性</button><button>细节</button></div>
    </aside>

    <div class="res">
      <button aria-label="装配导航器" class="gold"><svg><use href="#rm"/></svg></button><button aria-label="部件导航器" class="pinkf"><svg><use href="#rm"/></svg></button><button class="cur" aria-label="操作导航器"><svg><use href="#rm"/></svg></button><button aria-label="机床导航器"><svg><use href="#mtool"/></svg></button>
      <button class="gap" aria-label="网络"><svg><use href="#net"/></svg></button><button aria-label="培训"><svg><use href="#cur"/></svg></button><button aria-label="帮助"><svg><use href="#help"/></svg></button>
      <button class="gap" aria-label="历史"><svg><use href="#clk"/></svg></button><button aria-label="材料"><svg><use href="#chart"/></svg></button><button aria-label="向导"><svg><use href="#wand"/></svg></button><button aria-label="角色"><svg><use href="#user"/></svg></button><button aria-label="文档"><svg viewBox="0 0 16 16"><path d="M3 1h7l4 4v10H3z" fill="#f4f8ff" stroke="#90a8e0"/></svg></button>
    </div>
  </main>

  <div class="row foot">
    <div class="g"><i class="h"></i><label class="combo n53"><select aria-label="图层号"><option>53</option></select><i class="d"></i></label><button class="b" aria-label="层设置"><svg><use href="#stackd"/></svg></button><button class="b" aria-label="槽"><svg><use href="#slot"/></svg></button><button class="b" aria-label="槽2"><svg><use href="#slot2"/></svg></button><i class="s"></i><button class="b" aria-label="WCS动态"><svg viewBox="0 0 16 16"><path d="M2 2v11h11M2 2l11 11M5 2l8 5" fill="none" stroke="#802020"/><path d="M0 0h4v4H0zM0 12h4v4H0zM12 12h4v4h-4zM11 5h4v4h-4zM6 7h3v3H6z" fill="#b04030"/></svg></button><button class="b red" aria-label="WCS原点"><svg><use href="#csys"/></svg></button><button class="b red" aria-label="WCS旋转"><svg><use href="#csysr"/></svg></button><button class="b red" aria-label="WCS定向"><svg viewBox="0 0 16 16"><path d="M2 4h6M5 4v11M5 11l-3 3M10 1v8M10 6h5" fill="none" stroke="currentColor" stroke-width="1.500"/><path d="M8 2l2-2 2 2zM13 4l3 2-3 2z" fill="currentColor"/></svg></button><button class="b" aria-label="WCS设置"><svg><use href="#csysl"/></svg></button><button class="b" aria-label="XC方向"><svg viewBox="0 0 16 16"><path d="M5 1v8l9-3M5 9l3 3" stroke="#999" fill="none" stroke-width="1.500"/><path d="M6 10l9 2" stroke="#e04020" stroke-width="2"/><path d="M0 11h7v4H0z" fill="#222"/></svg></button><button class="b" aria-label="YC方向"><svg><use href="#csysk"/></svg></button><button class="b" aria-label="调色板"><svg><use href="#pal"/></svg></button><button class="b" aria-label="隐藏"><svg><use href="#bottle"/></svg></button><button class="b" aria-label="显示"><svg viewBox="0 0 16 16"><path d="M1 3l4-3 4 4-4 4z" fill="#d8def4" stroke="#7a88c0"/><path d="M7 8l5-2 4 3-2 6H8z" fill="#fbc820"/><path d="M2 9l5 4" stroke="#e07020" stroke-width="2"/></svg></button><button class="d e" aria-label="更多"></button></div>
    <div class="g"><i class="h"></i><label class="combo off any"><select aria-label="类型过滤" disabled><option>任何</option></select><i class="d"></i></label><label class="combo off asm"><select aria-label="选择范围" disabled><option>整个装配</option></select><i class="d"></i></label><i class="s"></i><button class="b" aria-label="选择过滤"><svg><use href="#filter"/></svg></button><i class="s"></i><button class="b" aria-label="约束"><svg><use href="#base"/></svg></button><button class="b" aria-label="配对"><svg><use href="#mate"/></svg></button><button class="d e" aria-label="更多"></button></div>
    <div class="g"><i class="h"></i><button class="b" aria-label="端点"><svg><use href="#ln"/></svg></button><button class="b" aria-label="中点"><svg><use href="#ln2"/></svg></button><button class="b" aria-label="控制点"><svg><use href="#scv"/></svg></button><button class="b" aria-label="交点"><svg><use href="#cross"/></svg></button><button class="b" aria-label="圆心"><svg><use href="#cdot"/></svg></button><button class="b" aria-label="象限点"><svg><use href="#quad"/></svg></button><button class="b" aria-label="存在点"><svg><use href="#plus"/></svg></button><button class="d e" aria-label="更多"></button></div>
    <div class="g"><i class="h"></i><button class="b" aria-label="程序"><svg><use href="#s2"/></svg></button><button class="b" aria-label="夹紧"><svg><use href="#t2"/></svg></button><button class="b" aria-label="定位"><svg><use href="#s3"/></svg></button><i class="s"></i><button class="b" aria-label="零件"><svg><use href="#s4"/></svg></button><button class="d e" aria-label="更多"></button></div>
  </div>

  <footer class="task">
    <button class="start"><svg class="i"><use href="#flag"/></svg>开始</button>
    <i class="h"></i>
    <div class="quick"><button class="b" aria-label="桌面"><svg><use href="#desk"/></svg></button><button class="b" aria-label="浏览器"><svg><use href="#bear"/></svg></button><button class="b" aria-label="文件夹"><svg><use href="#fold"/></svg></button><button class="b" aria-label="表格"><svg><use href="#xls"/></svg></button><button class="b" aria-label="表格二"><svg><use href="#xls"/></svg></button><button class="b" aria-label="NX"><svg><use href="#nx"/></svg></button><button class="b" aria-label="NX 二"><svg><use href="#nx"/></svg></button><button class="b" aria-label="工具"><svg><use href="#tt"/></svg></button><button class="b more">»</button></div>
    <i class="h"></i>
    <div class="tasks"><button class="act lat"><svg class="i"><use href="#nx"/></svg>NX 4 - Manufac...</button><button><svg class="i"><use href="#ofold"/></svg>应用</button><button><svg class="i"><use href="#ofold"/></svg>ls</button><button><svg class="i"><use href="#ofold"/></svg>UGNC</button></div>
    <div class="tray"><svg class="i"><use href="#umb"/></svg><svg class="i"><use href="#nv"/></svg><span class="ch">CH</span><svg class="i"><use href="#kb"/></svg><svg class="i"><use href="#usb"/></svg><svg class="i"><use href="#spk"/></svg><time>11:42</time></div>
  </footer>

  <form class="dlg" onsubmit="return false">
    <div class="dt"><svg class="i"><use href="#nx"/></svg><h2>FACE_MILLING</h2><button type="button" class="wx" aria-label="关闭对话框">✕</button></div>
    <div class="tabs"><button type="button" class="cur">主界面</button><button type="button">组</button></div>
    <div class="panel">
      <p class="c">几何体</p>
      <div class="ibox"><button type="button" class="yel" aria-label="部件"><svg><use href="#part"/></svg></button><button type="button" class="tealf on" aria-label="面"><svg><use href="#part"/></svg></button><button type="button" aria-label="检查体"><svg><use href="#slabr"/></svg></button><button type="button" aria-label="检查边界"><svg><use href="#slabo"/></svg></button></div>
      <div class="three"><button type="button" class="pb" disabled>编辑</button><button type="button" class="pb">选择</button><button type="button" class="pb" disabled>显示</button></div>
      <hr>
      <div class="f tall"><label for="cut">切削方式</label><button type="button" id="cut" class="combo cut" aria-label="切削方式"><svg><use href="#zig"/></svg><i class="d"></i></button></div>
      <div class="f"><label for="step">步进</label><span class="combo step"><select id="step"><option>刀具直径</option></select><i class="d"></i></span></div>
      <div class="f"><label for="pct">百分比</label><span class="in hi"><input id="pct" value="70.0000"></span></div>
      <div class="f"><label for="blank">毛坯距离</label><span class="in"><input id="blank" value="0.5000"></span></div>
      <div class="f"><label for="depth">每一刀的深度</label><span class="in"><input id="depth" value="0.5000"></span></div>
      <div class="f dis"><label for="add">附加刀路</label><span class="in"><input id="add" value="0" disabled></span></div>
      <hr>
      <button type="button" class="pb ctl">控制点</button>
      <div class="f"><label for="stock">部件余量</label><span class="in"><input id="stock" value="0.3500"></span><button type="button" class="lk" aria-label="锁定"><svg class="i"><use href="#lock"/></svg></button></div>
      <div class="f"><label for="floor">最终底面余量</label><span class="in"><input id="floor" value="0.0000"></span></div>
      <hr>
      <p class="c">进刀/退刀</p>
      <div class="two"><button type="button" class="pb">方法</button><button type="button" class="pb">自动</button></div>
      <button type="button" class="pb solo">切削</button>
      <div class="two"><button type="button" class="pb">角</button><button type="button" class="pb">避让</button><button type="button" class="pb">进给率</button><button type="button" class="pb">机床</button></div>
      <div class="f feed"><label for="feed">切削进给</label><span class="in"><input id="feed" value="400.0000"></span><button type="button" class="lk" aria-label="解锁"><svg class="i"><use href="#unlock"/></svg></button></div>
      <hr>
      <fieldset><legend>刀轨</legend><button type="button" aria-label="编辑显示"><svg><use href="#path1"/></svg></button><button type="button" aria-label="选项"><svg><use href="#path2"/></svg></button></fieldset>
    </div>
    <div class="ibox bot"><button type="button" aria-label="生成"><svg><use href="#gen"/></svg></button><button type="button" aria-label="重播"><svg><use href="#replay"/></svg></button><button type="button" aria-label="确认"><svg><use href="#verify"/></svg></button><button type="button" aria-label="列表"><svg><use href="#list"/></svg></button></div>
    <hr>
    <div class="acts"><button class="def">确定</button><button type="button">应用</button><button type="button">取消</button></div>
  </form>

  <svg class="ptr" viewBox="0 0 14 22" aria-hidden="true"><path d="M1 1v16l4-4 3 8 3-1-3-8h5z" fill="#fff" stroke="#111"/></svg>

  <div class="wm">
    <svg viewBox="0 0 72 82" aria-hidden="true"><path d="M36 1L71 21v40L36 81 1 61V21z" fill="#3da6e0"/><path d="M36 1L71 21Q50 10 30 22Q12 31 8 52L1 61V21z" fill="#a8dcee"/><path d="M36 19l18 10v23L36 63 18 52V29z" fill="#eaf4fa"/><path d="M36 25l12 6-12 7-12-7zM22 35l12 7v14l-12-7zM50 35l-12 7v14l12-7z" fill="#3da6e0"/><path d="M2 61q16-2 16-22M71 24q-14 6-13 20Q58 64 36 80" fill="none" stroke="#d8eef8" stroke-width="2"/></svg>
    <p><b>3D世界网</b><span>WWW.3DSJW.COM</span></p>
  </div>
</div>
</body>
</html>
```
FILE: styles.css
```css
*{box-sizing:border-box}
:root{--face:#d6d3ce;--dk:#848284;--vd:#424142}
body{margin:0;background:#fff;color:#000;font:12px/16px Roboto,"Noto Sans CJK SC",sans-serif}
button,input,select{font:inherit;color:inherit;padding:0;margin:0;border:0;background:none;border-radius:0}
p,h1,h2,ul{margin:0;padding:0;list-style:none;font-size:12px}
i,em{font-style:normal}
u{text-underline-offset:2px}
.sprite{position:absolute;width:0;height:0}
svg{display:block;flex:none}
.i{width:16px;height:16px}
.fa{fill:var(--a,#ddd)}
.fb{fill:var(--b,#999)}
.fc{fill:var(--c,#777)}

.app{position:relative;display:flex;flex-direction:column;margin:2px 9px 0 15px;min-height:calc(100vh - 14px);background:var(--face)}

/* title and menu */
.titlebar{position:relative;display:flex;align-items:center;gap:1px;height:18px;padding:0 2px;background:linear-gradient(90deg,#848284,#b5b3b8)}
.titlebar h1{flex:1;color:var(--face);font:700 12px/18px "Noto Sans","Noto Sans CJK SC",sans-serif;white-space:nowrap}
.wb{display:flex}
.wb button,.wx{width:16px;height:14px;background:var(--face);border:1px solid;border-color:#fff var(--vd) var(--vd) #fff;font:700 10px/10px "DejaVu Sans",sans-serif}
.titlebar .wb button:last-child{margin-left:2px}
.wb .rst::before{content:"";display:block;width:7px;height:6px;margin-left:2px;border:1px solid #000;border-top-width:2px;box-shadow:2px -2px 0 -1px var(--face),2px -2px 0 0 #000}
.wb .dis{color:var(--dk)}
.rec{position:absolute;right:36px;top:0;color:#f00;font:700 13px/15px "Liberation Mono",monospace}
.menubar{display:flex;align-items:center;height:26px;padding:0 4px;border-top:1px solid #fff;border-bottom:1px solid var(--dk)}
.menubar>svg{margin-left:0}
.menus{display:flex;gap:12px;margin-left:6px;flex:1;white-space:nowrap}
.lat{font-size:11px}

/* tool bars */
.row{display:flex;align-items:stretch;height:26px;border-top:1px solid #fff}
.g{display:flex;align-items:center;padding:0 4px 0 2px;margin-right:1px;border-right:1px solid var(--dk);border-bottom:1px solid var(--dk);box-shadow:1px 0 #fff}
.far{margin-left:6px}
.h{width:3px;height:20px;margin-right:2px;border:1px solid;border-color:#fff var(--dk) var(--dk) #fff;flex:none}
.s{width:2px;height:22px;margin:0 2px;border-left:1px solid var(--dk);border-right:1px solid #fff;flex:none}
.b{display:grid;place-items:center;width:23px;height:22px;flex:none}
.b svg{width:16px;height:16px}
.b svg.big{width:18px;height:18px}
.d{display:grid;place-items:center;width:10px;height:20px;flex:none}
.d::before{content:"";border:3px solid transparent;border-top-color:#000;border-bottom:0}
.d.e{align-items:end;padding-bottom:5px}
.t{padding:0 1px;white-space:nowrap}
.nar{width:19px}.ji{width:17px}.yi{width:33px}
.on{border:1px solid;border-color:var(--dk) #fff #fff var(--dk);background:repeating-conic-gradient(#fff 0 25%,#d6d3ce 0 50%) 0 0/2px 2px}
.z{padding:3px;background:#ebe8dd content-box;color:#1a2af0;font:700 15px/16px "Noto Sans CJK SC",sans-serif}
.navy{color:#0a1a80}
.sm{display:block;padding:3px 2px;font-size:10px;line-height:16px;white-space:nowrap}
.sm2{font-size:9px}
.sm b{color:#e01818}
.gf{display:flex;justify-content:center;font:700 12px/14px "Liberation Sans",sans-serif}
.gf b{color:#1a1af0;align-self:start}.gf em{color:#f03010;align-self:end}
.blue{--a:#c8e4ff;--b:#5aa4f0;--c:#1c64d0}
.redc{--a:#b8d8fc;--b:#f01414;--c:#4a8cf0}
.rgb{--a:#f4f4f4;--b:#10c020;--c:#e01818}
.maroon{--a:#e8b030;color:#702038}
.redg{--a:#30e030;color:#e01818}
.violet{color:#5058b8}.teal{color:#5c8c80}.green{color:#38a058}.pink{color:#e868a0}.gold{color:#d8b010;--a:#e8d820}
.lilac{color:#b898e8}.peri{color:#7888e8}.red{color:#d84030}.pinkf{--a:#d8a8a0}

.status{display:grid;grid-template-columns:483px 1fr;height:21px;margin-right:12px;border:1px solid var(--dk);border-color:var(--dk) #fff #fff var(--dk);line-height:18px;margin-top:1px}
.status b{padding-left:2px}
.status b+b{border-left:1px solid var(--dk);box-shadow:inset 1px 0 #fff}

/* work area */
.work{display:flex;flex:1;margin-top:1px}
.side{display:flex;width:52px;padding-left:1px;flex:none}
.col{width:25px}
.low{margin-left:1px;padding-top:27px}
.vg{display:flex;flex-direction:column;align-items:center;padding-top:4px;margin-bottom:3px;border:1px solid;border-color:#fff var(--dk) var(--dk) #fff}
.vh{width:20px;height:3px;margin-bottom:3px;border:1px solid;border-color:#fff var(--dk) var(--dk) #fff}
.vs{width:21px;height:2px;margin:2px 0;border-top:1px solid var(--dk);border-bottom:1px solid #fff}
.vg .b{height:23px}
.vg .l{align-self:start;width:12px;height:10px;display:grid;place-items:center}
.l::before,.left::before{content:"";border:3px solid transparent;border-right-color:#000;border-left:0}
.view{flex:1;min-width:0;background:#000;border:1px solid var(--dk);border-right:0}
.model{width:626px;max-width:100%}
.axis{fill:#ff6a10;font:11px "Liberation Sans",sans-serif}
.nav{display:flex;flex-direction:column;width:315px;flex:none;padding:3px 0 0 9px;border-left:1px solid #fff;box-shadow:inset 5px 0 var(--face),inset 7px 0 var(--dk)}
.nav h2{font:700 12px/17px "Noto Sans CJK SC",sans-serif;white-space:pre}
.colhead{height:17px;padding-left:6px;line-height:15px;border:1px solid;border-color:#fff var(--dk) var(--dk) #fff}
.tree{flex:1;background:#fff;border-top:1px solid var(--dk);padding-left:2px}
.tree li{display:flex;align-items:center;height:16px;white-space:nowrap;gap:2px}
.tree .i{height:14px}
.tree .no{width:14px}
.tree .bang{width:14px}
.ln{width:9px;border-top:1px dotted var(--dk)}
.l1{padding-left:6px}.l0{padding-left:2px}.l2{padding-left:25px}
.exp{width:9px;height:9px;margin-right:5px;border:1px solid var(--dk);font:9px/6px "DejaVu Sans",sans-serif}
.sel{flex:1;background:#0a246a;color:#fff}
.hs{display:flex;height:15px;border-bottom:1px solid var(--vd)}
.hs span,.left{border:1px solid;border-color:#fff var(--vd) var(--vd) #fff}
.left{display:grid;place-items:center;width:15px}
.hs span{flex:1}
.folds{display:grid;gap:7px;margin-top:4px;padding:8px 0 11px 4px;border-top:1px solid var(--dk);box-shadow:inset 0 1px #fff}
.folds button{height:17px;padding-left:9px;text-align:left;font-weight:700;line-height:15px;border:1px solid var(--dk);border-radius:6px;box-shadow:inset 1px 1px #fff}
.res{width:29px;flex:none;background:#848284;padding:14px 7px 0 0}
.res button{display:block;width:22px;height:32px;margin-bottom:1px;padding-left:3px;background:var(--face);border:1px solid;border-color:#fff var(--vd) var(--vd) #fff;border-radius:0 4px 4px 0}
.res .cur{width:25px;height:36px}
.res .gap{margin-top:14px}
.res svg{width:16px;height:16px}

/* bottom bars */
.foot{height:29px;margin-top:2px;padding:1px 0}
.foot .g:last-child{margin-left:2px}
.combo{display:flex;align-items:center;background:#fff}
.combo select{appearance:none;flex:1;min-width:0;padding-left:1px;opacity:1}
.n53{width:35px;height:16px;margin:0 6px 0 4px}
.n53 .d{width:14px;height:14px;background:var(--face)}
.off{height:19px;margin:0 6px 0 2px;border:1px solid #fff;background:var(--face);color:var(--dk)}
.off .d{width:18px;opacity:.5}
.any{width:80px}.asm{width:98px}
.task{display:flex;align-items:center;height:28px;padding:0 2px;gap:2px;border-top:1px solid #fff}
.start{display:flex;align-items:center;gap:1px;width:50px;height:22px;margin-right:3px}
.start,.tasks button{border:1px solid;border-color:#fff var(--vd) var(--vd) #fff;box-shadow:inset -1px -1px var(--dk)}
.quick{display:flex}
.quick .more{width:20px;font-size:16px;font-weight:700;line-height:16px}
.tasks{display:flex;gap:4px;flex:1}
.tasks button{display:flex;align-items:center;gap:2px;width:110px;height:22px;padding-left:3px;white-space:nowrap}
.tasks .act{border-color:var(--vd) #fff #fff var(--vd);box-shadow:none;background:repeating-conic-gradient(#fff 0 25%,#d6d3ce 0 50%) 0 0/2px 2px}
.tray{display:flex;align-items:center;gap:2px;width:166px;height:23px;padding-left:3px;border:1px solid;border-color:var(--dk) #fff #fff var(--dk)}
.ch{padding:0 1px;background:#000084;color:#fff;font-size:11px;line-height:15px}
.tray time{margin-left:12px}

/* dialog */
.dlg{position:absolute;top:81px;right:18px;width:229px;padding:3px;background:var(--face);border:1px solid;border-color:var(--face) var(--vd) var(--vd) var(--face);box-shadow:inset 1px 1px #fff,inset -1px -1px var(--dk)}
.dt{display:flex;align-items:center;gap:2px;height:18px;padding:0 2px 0 1px;background:linear-gradient(90deg,#0a246a,#a6caf0)}
.dt h2{flex:1;color:#fff;font:700 11px/18px "Noto Sans",sans-serif}
.tabs{display:flex;align-items:end;height:24px;padding-left:5px}
.tabs button{width:41px;height:17px;padding-left:3px;text-align:left;border:1px solid;border-color:#fff var(--vd) transparent transparent;line-height:14px}
.tabs .cur{width:50px;height:20px;padding-left:5px;border-color:#fff var(--vd) transparent #fff;border-radius:3px 3px 0 0;line-height:18px}
.panel{margin:0 5px;padding:4px 4px 5px;border:1px solid;border-color:#fff var(--vd) var(--vd) #fff;box-shadow:inset -1px -1px var(--dk)}
.c{text-align:center;height:16px}
.ibox{display:flex;justify-content:center;width:127px;height:33px;margin:4px auto 3px;padding:1px 3px;border:1px solid var(--dk);box-shadow:1px 1px #fff,inset 1px 1px #fff}
.ibox button{display:grid;place-items:center;width:30px;height:29px;flex:none}
.ibox svg,fieldset svg{width:24px;height:24px}
.yel{--a:#fffff0}.tealf{--a:#008284}
.three{display:grid;grid-template-columns:repeat(3,1fr);gap:2px;margin:0 1px 4px 0}
.pb{display:block;width:100%;height:21px;border:1px solid;border-color:#fff var(--vd) var(--vd) #fff;box-shadow:inset -1px -1px var(--dk);line-height:18px;text-align:center}
.pb:disabled,.dis{color:var(--dk);text-shadow:1px 1px #fff}
.ctl{margin-bottom:2px}
hr{height:2px;margin:0 0 2px;border:0;border-top:1px solid var(--dk);border-bottom:1px solid #fff}
.f{display:flex;align-items:center;height:23px}
.f label{flex:1}
.in{width:62px;height:19px;background:#fff;border:1px solid;border-color:var(--dk) #fff #fff var(--dk);box-shadow:inset 1px 1px var(--vd);padding:2px 1px 1px}
.in input{display:block;width:100%;height:15px;text-align:right;font:12px/15px "Liberation Mono",monospace}
.hi input{background:#0a246a;color:#fff}
.dis .in{background:var(--face)}
.in input:disabled{color:var(--dk)}
.lk{display:grid;place-items:center;width:20px;height:20px;margin-left:3px;border:1px solid;border-color:#fff var(--vd) var(--vd) #fff}
.tall{height:34px}
.panel .combo{border:1px solid;border-color:var(--dk) #fff #fff var(--dk);box-shadow:inset 1px 1px var(--vd);padding:2px}
.step{width:96px;height:20px}
.panel .combo .d{width:16px;height:100%;background:var(--face);border:1px solid;border-color:#fff var(--vd) var(--vd) #fff}
.panel .combo .d::before{border-width:4px 4px 0}
.cut{width:49px;height:32px}
.cut svg{width:20px;height:18px;margin:auto}
.two{display:grid;grid-template-columns:1fr 1fr;gap:2px;margin-top:3px;margin-right:1px}
.solo{margin:4px 0 2px}
.two+.feed{margin-top:3px}
fieldset{display:flex;justify-content:center;gap:6px;width:67px;height:47px;margin:3px auto 0;padding:2px 0 0;border:1px solid var(--dk);box-shadow:1px 1px #fff}
fieldset legend{padding:0 2px;line-height:12px;margin-left:4px}
.bot{margin-top:5px;margin-bottom:3px}
.dlg>hr{margin:7px 2px 4px}
.acts{display:flex;justify-content:end;gap:6px;padding:0 9px 5px 0}
.acts button{width:53px;height:20px;background:linear-gradient(#fff,#e8e6e0);border:1px solid #003c74;border-radius:3px;line-height:16px}
.acts .def{box-shadow:inset 0 0 0 2px #a8c8f4}
.ptr{position:absolute;top:196px;right:141px;width:14px;height:22px}

.wm{position:absolute;right:16px;bottom:0;display:flex;gap:11px;width:257px;opacity:.7;pointer-events:none}
.wm svg{width:72px;height:82px}
.wm p{display:grid;align-content:start;padding-top:14px;color:#fff;opacity:.6;white-space:nowrap}
.wm b{font:700 40px/38px "Liberation Sans","Noto Sans CJK SC",sans-serif}
.wm span{font:16px/22px "DejaVu Sans",sans-serif}
```
